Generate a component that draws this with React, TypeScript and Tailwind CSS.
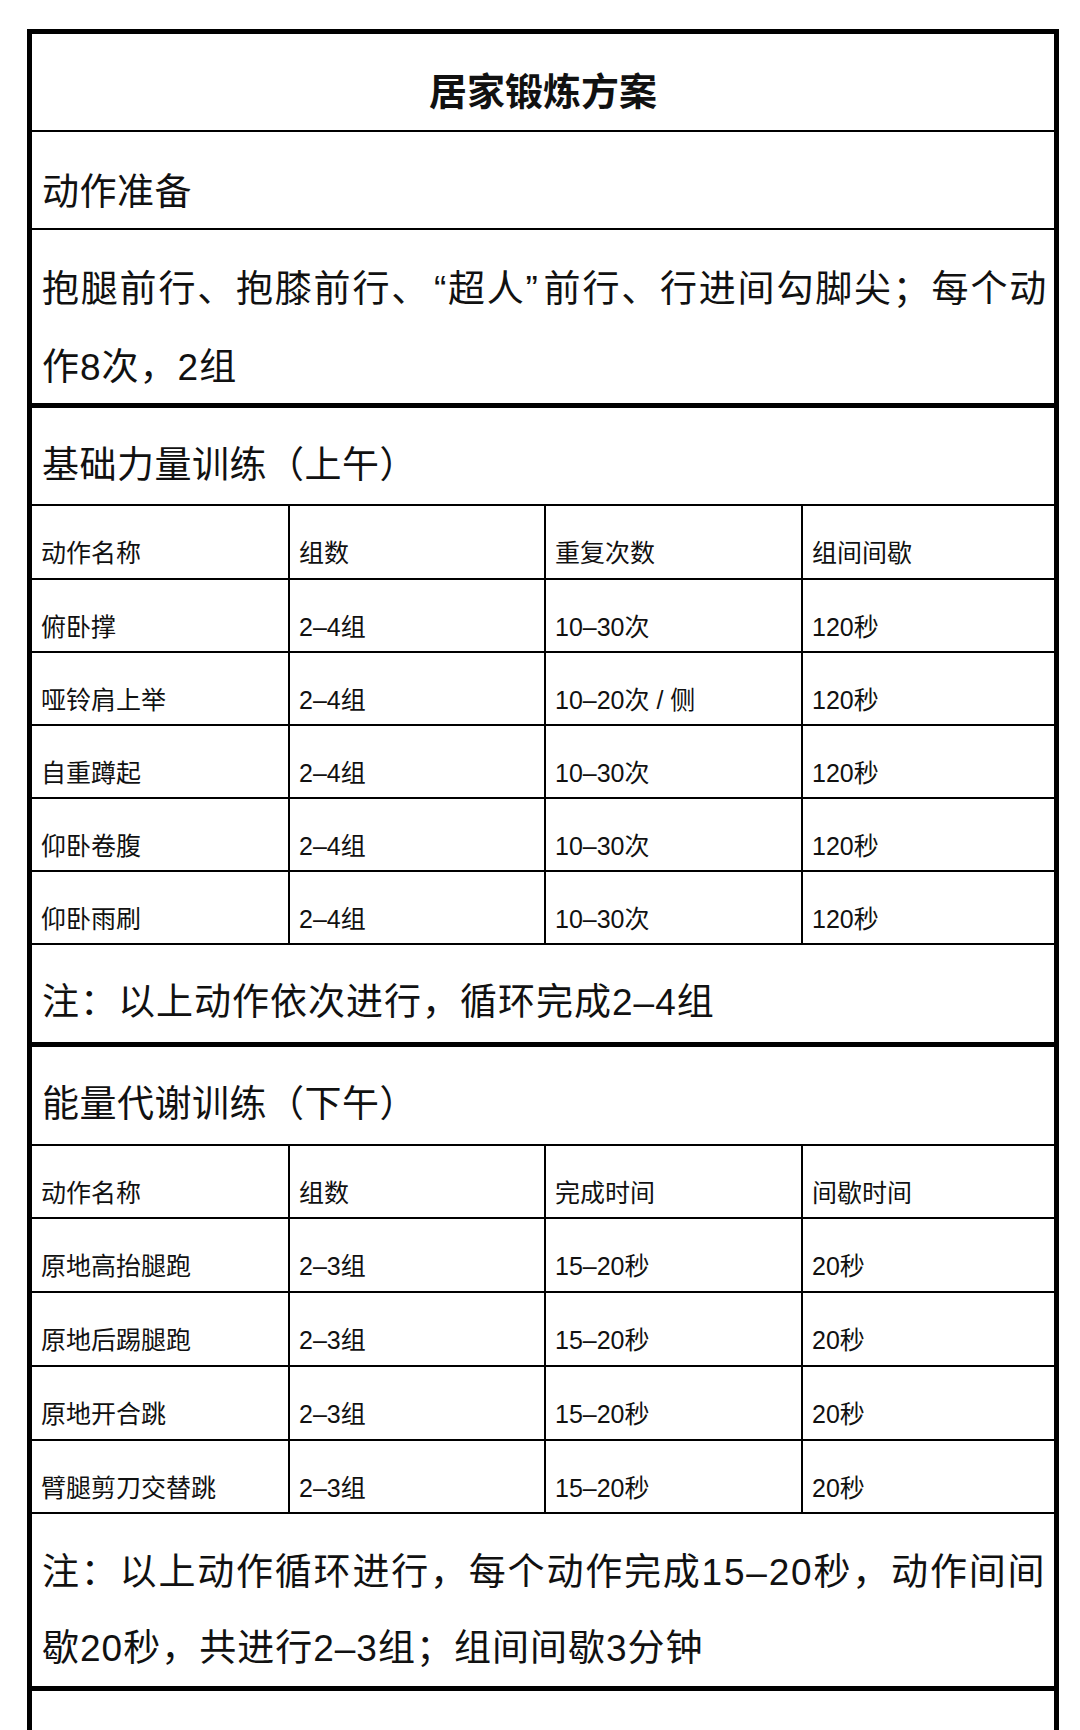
const font = "font-['Liberation_Sans','Noto_Sans_CJK_SC',sans-serif]";

type Cells = [string, string, string, string];

const morningHead: Cells = ['动作名称', '组数', '重复次数', '组间间歇'];
const morning: Cells[] = [
  ['俯卧撑', '2–4组', '10–30次', '120秒'],
  ['哑铃肩上举', '2–4组', '10–20次 / 侧', '120秒'],
  ['自重蹲起', '2–4组', '10–30次', '120秒'],
  ['仰卧卷腹', '2–4组', '10–30次', '120秒'],
  ['仰卧雨刷', '2–4组', '10–30次', '120秒'],
];

const afternoonHead: Cells = ['动作名称', '组数', '完成时间', '间歇时间'];
const afternoon: Cells[] = [
  ['原地高抬腿跑', '2–3组', '15–20秒', '20秒'],
  ['原地后踢腿跑', '2–3组', '15–20秒', '20秒'],
  ['原地开合跳', '2–3组', '15–20秒', '20秒'],
  ['臂腿剪刀交替跳', '2–3组', '15–20秒', '20秒'],
];

function Row({ cells, h }: { cells: Cells; h: string }) {
  return (
    <div className={`grid grid-cols-[256px_256px_257px_1fr] border-t-2 border-black ${h}`}>
      {cells.map((c, i) => (
        <div
          key={i}
          className={`flex items-center pt-[24px] pl-[9px] text-[25px] whitespace-nowrap ${i > 0 ? 'border-l-2 border-black' : ''}`}
        >
          {c}
        </div>
      ))}
    </div>
  );
}

export default function App() {
  return (
    <div className={`min-h-[1730px] bg-white pt-[29px] pl-[27px] text-[#111] ${font}`}>
      <div className="w-[1032px] border-[5px] border-black">
        {/* title */}
        <div className="flex h-[96px] items-center justify-center pt-[20px] text-[38px] font-bold">
          居家锻炼方案
        </div>

        {/* warm-up */}
        <div className="flex h-[98px] items-center border-t-2 border-black pt-[25px] pl-[10px] text-[37px] tracking-[0.5px]">
          动作准备
        </div>
        <div className="h-[175px] border-t-2 border-black pt-[21px] pl-[10px] text-[37px] leading-[78px] tracking-[1px] whitespace-nowrap">
          <span className="tracking-[1.8px]">
            抱腿前行、抱膝前行、<span className="inline-block w-[18px] text-right">“</span>超人<span className="inline-block w-[18px] text-left">”</span>前行、行进间勾脚尖；每个动
          </span>
          <br />
          作8次，2组
        </div>

        {/* morning */}
        <div className="flex h-[101px] items-center border-t-[5px] border-black pt-[20px] pl-[10px] text-[37px] tracking-[0.5px]">
          基础力量训练（上午）
        </div>
        <Row cells={morningHead} h="h-[74px]" />
        {morning.map((r) => (
          <Row key={r[0]} cells={r} h="h-[73px]" />
        ))}
        <div className="flex h-[99px] items-center border-t-2 border-black pt-[19px] pl-[10px] text-[37px] tracking-[1px] whitespace-nowrap">
          注：以上动作依次进行，循环完成2–4组
        </div>

        {/* afternoon */}
        <div className="flex h-[102px] items-center border-t-[5px] border-black pt-[19px] pl-[10px] text-[37px] tracking-[0.5px]">
          能量代谢训练（下午）
        </div>
        <Row cells={afternoonHead} h="h-[73px]" />
        {afternoon.map((r, i) => (
          <Row key={r[0]} cells={r} h={i === 3 ? 'h-[73px]' : 'h-[74px]'} />
        ))}
        <div className="h-[174px] border-t-2 border-black pt-[21px] pl-[10px] text-[37px] leading-[76px] tracking-[1px] whitespace-nowrap">
          <span className="tracking-[1.8px]">注：以上动作循环进行，每个动作完成15–20秒，动作间间</span>
          <br />
          歇20秒，共进行2–3组；组间间歇3分钟
        </div>

        <div className="h-[100px] border-t-[5px] border-black" />
      </div>
    </div>
  );
}
